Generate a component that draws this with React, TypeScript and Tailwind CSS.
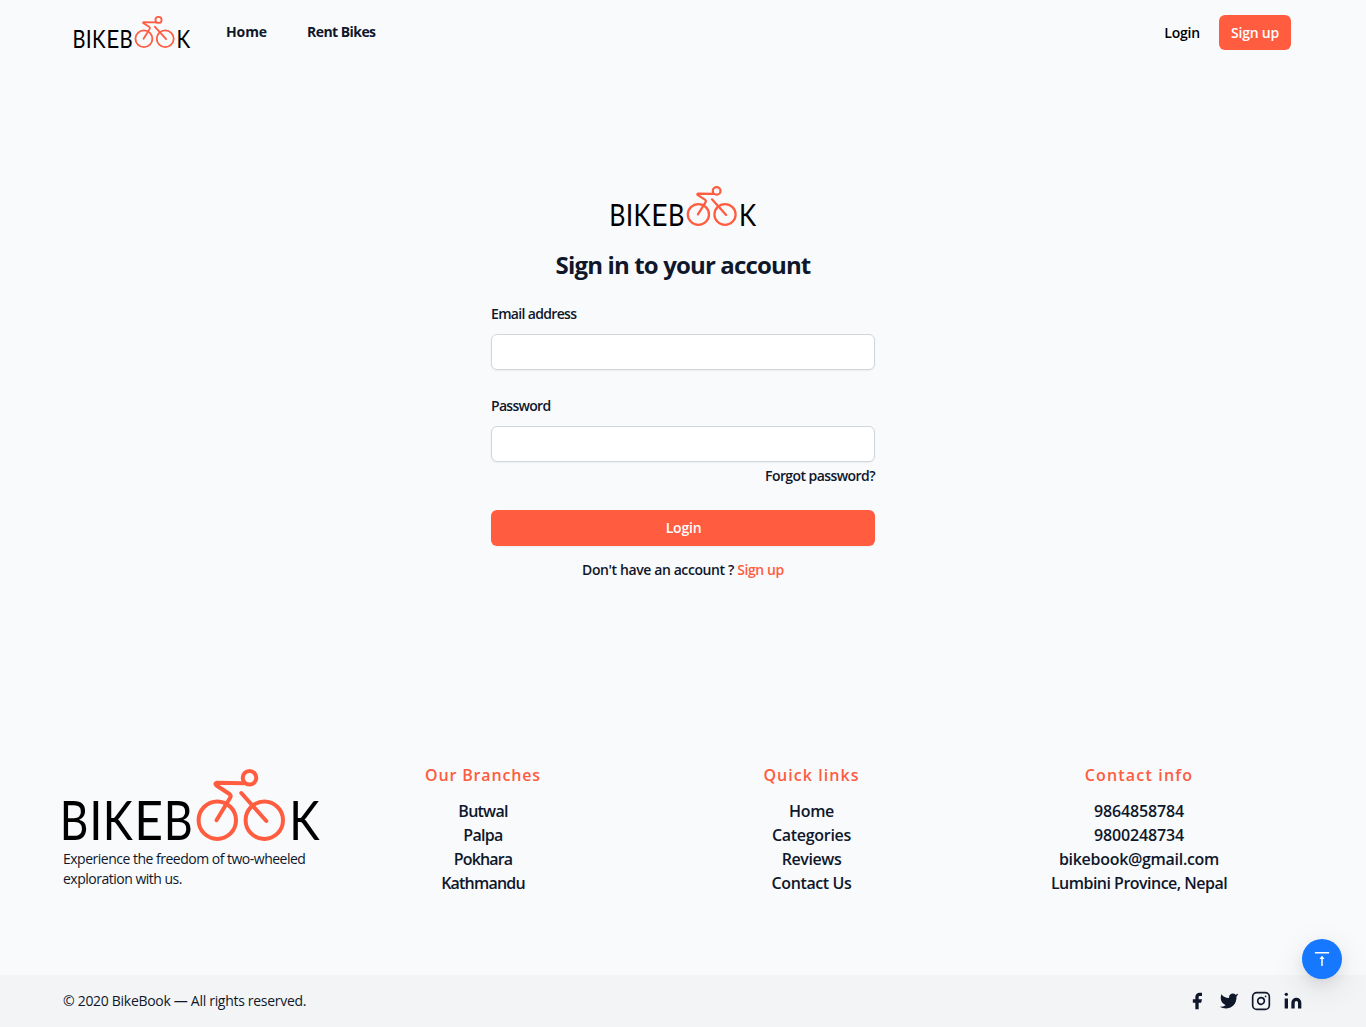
import React from "react";

function Logo({ className }: { className: string }) {
  return (
    <svg viewBox="0 0 256 72" preserveAspectRatio="none" className={className} role="img" aria-label="BikeBook">
      <g fill="#000" fontSize="55" fontFamily="Lato, 'Open Sans', sans-serif">
        <text x="-3.2" y="71.2" textLength="28.6" lengthAdjust="spacingAndGlyphs">B</text>
        <text x="26.2" y="71.2" textLength="13.2" lengthAdjust="spacingAndGlyphs">I</text>
        <text x="39.8" y="71.2" textLength="30" lengthAdjust="spacingAndGlyphs">K</text>
        <text x="71.2" y="71.2" textLength="28.8" lengthAdjust="spacingAndGlyphs">E</text>
        <text x="100.7" y="71.2" textLength="29" lengthAdjust="spacingAndGlyphs">B</text>
        <text x="226.2" y="71.2" textLength="30.3" lengthAdjust="spacingAndGlyphs">K</text>
      </g>
      <g fill="none" stroke="#ff5c40" strokeWidth="4" strokeLinecap="round" strokeLinejoin="round">
        <circle cx="154.3" cy="51.2" r="18.7" />
        <circle cx="201.3" cy="51.2" r="18.7" />
        <circle cx="186.5" cy="8.8" r="6.8" />
        <path d="M181 14.2 L154 13.8 Q151 14.4 153.5 16.5 L166.5 25 Q168.5 26.5 167 29 L153.5 51.2" />
        <path d="M178.3 24 L203.3 52" />
      </g>
    </svg>
  );
}

const columns = [
  {
    title: "Our Branches",
    titleClass: "tracking-[0.85px]",
    width: "w-[328px]",
    items: [
      { text: "Butwal", cls: "tracking-[-0.75px]" },
      { text: "Palpa", cls: "tracking-[-0.7px]" },
      { text: "Pokhara", cls: "tracking-[-0.85px]" },
      { text: "Kathmandu", cls: "tracking-[-0.8px]" },
    ],
  },
  {
    title: "Quick links",
    titleClass: "tracking-[1.05px]",
    width: "w-[329px]",
    items: [
      { text: "Home", cls: "tracking-[-0.3px]" },
      { text: "Categories", cls: "tracking-[-0.3px]" },
      { text: "Reviews", cls: "tracking-[-0.4px]" },
      { text: "Contact Us", cls: "tracking-[-0.4px]" },
    ],
  },
  {
    title: "Contact info",
    titleClass: "tracking-[1.2px]",
    width: "w-[326px]",
    items: [
      { text: "9864858784", cls: "tracking-[-0.15px]" },
      { text: "9800248734", cls: "tracking-[-0.15px]" },
      { text: "bikebook@gmail.com", cls: "tracking-[-0.3px]" },
      { text: "Lumbini Province, Nepal", cls: "tracking-[-0.52px]" },
    ],
  },
];

export default function App() {
  return (
    <div className="flex h-[1027px] w-full flex-col overflow-hidden whitespace-nowrap bg-[#f9fafc] font-['Open_Sans',sans-serif] text-sm text-slate-900">
      <header className="flex h-16 items-center pr-[75px] pl-[74px]">
        <Logo className="h-8 w-[116px] overflow-visible" />
        <nav className="ml-9 flex gap-10 font-bold">
          <a className="w-[41px] tracking-[-0.1px]">Home</a>
          <a className="tracking-[-0.55px]">Rent Bikes</a>
        </nav>
        <div className="ml-auto flex items-center gap-[19px] font-semibold">
          <a className="mt-px tracking-[-0.2px] text-black">Login</a>
          <a className="mt-px flex h-[35px] w-[72px] items-center justify-center rounded-md bg-[#ff5c40] tracking-[-0.2px] text-white">Sign up</a>
        </div>
      </header>

      <main className="flex h-[705px] flex-col items-center pt-[122px]">
        <Logo className="h-10 w-[145px] overflow-visible" />
        <h1 className="mt-[23px] text-2xl leading-8 font-bold tracking-[-0.85px]">Sign in to your account</h1>
        <form className="mt-[21px] flex w-96 flex-col">
          <label className="h-6 leading-6 font-semibold tracking-[-0.67px]">Email address</label>
          <input className="mt-2 h-9 rounded-md border border-gray-300 bg-white px-3 shadow-xs" />
          <label className="mt-6 h-6 leading-6 font-semibold tracking-[-0.7px]">Password</label>
          <input type="password" className="mt-2 h-9 rounded-md border border-gray-300 bg-white px-3 shadow-xs" />
          <a className="mt-1 self-end leading-5 font-semibold tracking-[-0.57px]">Forgot password?</a>
          <button type="button" className="mt-6 h-9 rounded-md bg-[#ff5c40] pl-px font-semibold tracking-[-0.2px] text-white shadow-xs">Login</button>
          <p className="mt-[14px] text-center leading-5 font-semibold tracking-[-0.4px]">
            Don't have an account ? <a className="text-[#ff5c40]">Sign up</a>
          </p>
        </form>
      </main>

      <footer className="flex flex-1 flex-col">
        <div className="flex h-[206px] pl-[63px]">
          <div className="w-64">
            <Logo className="h-[72px] w-64 overflow-visible" />
            <p className="mt-2 leading-5 tracking-[-0.5px]">
              Experience the freedom of two-wheeled
              <br />
              exploration with us.
            </p>
          </div>
          {columns.map((column) => (
            <section key={column.title} className={`${column.width} -mt-[6px] text-center text-base font-semibold`}>
              <h2 className={`mb-3 leading-6 ${column.titleClass} text-[#ff5c40]`}>{column.title}</h2>
              <ul>
                {column.items.map((item) => (
                  <li key={item.text} className={`leading-6 ${item.cls}`}>{item.text}</li>
                ))}
              </ul>
            </section>
          ))}
        </div>
        <div className="flex h-[52px] items-center bg-gray-100 pr-[63px] pl-[63px]">
          <p className="tracking-[-0.3px]">© 2020 BikeBook — All rights reserved.</p>
          <div className="ml-auto flex gap-3">
            <svg className="size-5" fill="currentColor" stroke="currentColor" viewBox="0 0 24 24" strokeLinecap="round" strokeLinejoin="round" strokeWidth="0">
              <path d="M18 2h-3a5 5 0 00-5 5v3H7v4h3v8h4v-8h3l1-4h-4V7a1 1 0 011-1h3z" />
            </svg>
            <svg className="size-5" fill="currentColor" viewBox="0 0 24 24">
              <path d="M23 3a10.9 10.9 0 01-3.14 1.53 4.48 4.48 0 00-7.86 3v1A10.66 10.66 0 013 4s-4 9 5 13a11.64 11.64 0 01-7 2c9 5 20 0 20-11.5a4.5 4.5 0 00-.08-.83A7.72 7.72 0 0023 3z" />
            </svg>
            <svg className="size-5" fill="none" stroke="currentColor" strokeWidth="2" strokeLinecap="round" strokeLinejoin="round" viewBox="0 0 24 24">
              <rect width="20" height="20" x="2" y="2" rx="5" />
              <path d="M16 11.37A4 4 0 1112.63 8 4 4 0 0116 11.37zm1.5-4.87h.01" />
            </svg>
            <svg className="size-5" fill="currentColor" stroke="currentColor" strokeWidth="0" viewBox="0 0 24 24">
              <path d="M16 8a6 6 0 016 6v7h-4v-7a2 2 0 00-2-2 2 2 0 00-2 2v7h-4v-7a6 6 0 016-6zM2 9h4v12H2z" />
              <circle cx="4" cy="4" r="2" />
            </svg>
          </div>
        </div>
      </footer>

      <button aria-label="Back to top" className="fixed right-6 bottom-12 flex size-10 items-center justify-center rounded-full bg-[#1677ff] text-white shadow-[0_6px_16px_0_rgba(0,0,0,0.08),0_3px_6px_-4px_rgba(0,0,0,0.12),0_9px_28px_8px_rgba(0,0,0,0.05)]">
        <svg viewBox="64 64 896 896" className="size-[18px]" fill="currentColor">
          <path d="M859.9 168H164.1c-4.5 0-8.1 3.6-8.1 8v60c0 4.4 3.6 8 8.1 8h695.8c4.5 0 8.1-3.6 8.1-8v-60c0-4.4-3.6-8-8.1-8zM518.3 355a8 8 0 00-12.6 0l-112 141.7a7.98 7.98 0 006.3 12.9h73.9V848c0 4.4 3.6 8 8 8h60c4.4 0 8-3.6 8-8V509.7H624c6.7 0 10.4-7.7 6.3-12.9L518.3 355z" />
        </svg>
      </button>
    </div>
  );
}
